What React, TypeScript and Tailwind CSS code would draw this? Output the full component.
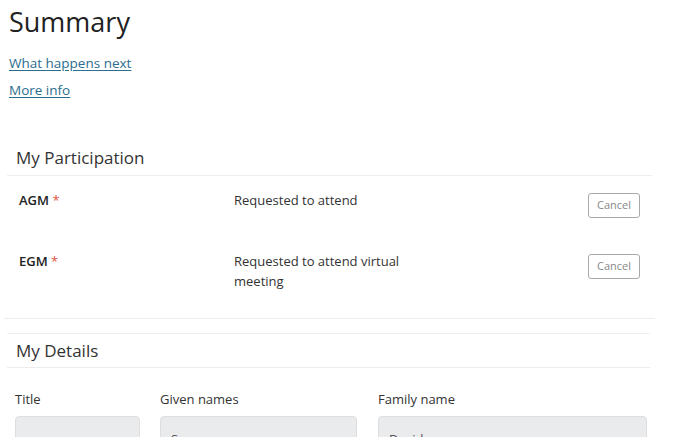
import React from 'react'

// Summary page: participation + details
const rows = [
  { label: 'AGM', status: 'Requested to attend' },
  { label: 'EGM', status: 'Requested to attend virtual meeting' },
]

export default function App() {
  return (
    <main
      className="w-full h-[437px] overflow-hidden bg-white text-[#333]"
      style={{ fontFamily: '"Open Sans", "Noto Sans", sans-serif' }}
    >
      {/* ===== HEADER ===== */}
      <div className="pl-[9px] pt-[6px]">
        <h1 className="text-[27px] leading-[32px] text-[#222]">Summary</h1>
        <div className="mt-[16px] flex flex-col items-start gap-[9px] text-[13.5px] leading-[18px]">
          <a href="#" className="text-[#2b6e8e] underline underline-offset-2">
            What happens next
          </a>
          <a href="#" className="text-[#2b6e8e] underline underline-offset-2">
            More info
          </a>
        </div>
      </div>

      {/* ===== MY PARTICIPATION ===== */}
      <section className="mt-[41px] ml-[4px] w-[651px] border-b border-[#eeeeee]">
        <div className="mx-[3px] border-b border-[#efefef] pl-[9px] pt-[6px] pb-[6px]">
          <h2 className="text-[17px] leading-[23px] text-[#333]">My Participation</h2>
        </div>
        {rows.map((r, i) => (
          <div
            key={r.label}
            className={`flex items-start pl-[15px] pt-[14px] ${i === 0 ? 'pb-[19px]' : 'pb-[27px]'}`}
          >
            <div className="w-[215px] text-[13px] leading-[20px] font-semibold text-[#222]">
              {r.label} <span className="text-[#e0533d] font-normal">*</span>
            </div>
            <div className="w-[185px] text-[13px] leading-[20px] text-[#333]">{r.status}</div>
            <div className="ml-auto mr-[15px] mt-[1px]">
              <button className="h-[25px] w-[52px] rounded-[3px] border border-[#a9a9a9] bg-white text-[11px] text-[#888]">
                Cancel
              </button>
            </div>
          </div>
        ))}
      </section>

      {/* ===== MY DETAILS ===== */}
      <section className="mt-[14px] ml-[7px] w-[643px] border-t border-[#f0f0f0]">
        <div className="border-b border-[#ececec] pl-[9px] pt-[6px] pb-[5px]">
          <h2 className="text-[17px] leading-[22px] text-[#333]">My Details</h2>
        </div>
        <div className="flex pt-[22px] pl-[8px] text-[13px] leading-[18px] text-[#333]">
          <div className="w-[125px]">
            <div>Title</div>
            <div className="mt-[8px] h-[44px] rounded-[4px] border border-[#dedede] bg-[#eaebed]" />
          </div>
          <div className="ml-[20px] w-[197px]">
            <div>Given names</div>
            <div className="mt-[8px] h-[44px] rounded-[4px] border border-[#dedede] bg-[#eaebed] px-[10px] pt-[13px] text-[#555]">
              Sam
            </div>
          </div>
          <div className="ml-[21px] w-[269px]">
            <div>Family name</div>
            <div className="mt-[8px] h-[44px] rounded-[4px] border border-[#dedede] bg-[#eaebed] px-[10px] pt-[13px] text-[#555]">
              Davidson
            </div>
          </div>
        </div>
      </section>
    </main>
  )
}
